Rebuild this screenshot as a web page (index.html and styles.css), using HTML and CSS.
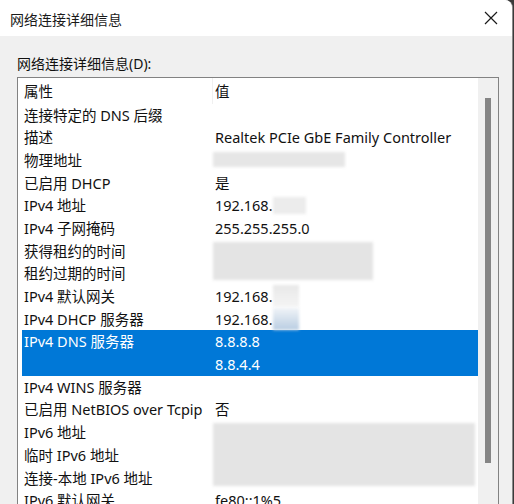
FILE: index.html
```html
<!DOCTYPE html>
<html lang="zh-CN">
<head>
<meta charset="utf-8">
<link rel="stylesheet" href="styles.css">
</head>
<body>
<div class="window">
  <div class="titlebar">
    <span class="title">网络连接详细信息</span>
    <svg class="close" width="14" height="14" viewBox="0 0 14 14"><path d="M1 1 L13 13 M13 1 L1 13" stroke="#1a1a1a" stroke-width="1.2" fill="none"/></svg>
  </div>
  <div class="content">
    <div class="label">网络连接详细信息(D):</div>
    <div class="listbox">
      <div class="list">
        <div class="row header"><div class="c1">属性</div><div class="c2">值</div></div>
        <div class="row"><div class="c1">连接特定的 DNS 后缀</div><div class="c2"></div></div>
        <div class="row"><div class="c1">描述</div><div class="c2">Realtek PCIe GbE Family Controller</div></div>
        <div class="row"><div class="c1">物理地址</div><div class="c2"><span class="blur mac"></span></div></div>
        <div class="row"><div class="c1">已启用 DHCP</div><div class="c2">是</div></div>
        <div class="row"><div class="c1">IPv4 地址</div><div class="c2">192.168.<span class="blur ip"></span></div></div>
        <div class="row"><div class="c1">IPv4 子网掩码</div><div class="c2">255.255.255.0</div></div>
        <div class="row"><div class="c1">获得租约的时间</div><div class="c2"><span class="blur lease"></span></div></div>
        <div class="row"><div class="c1">租约过期的时间</div><div class="c2"></div></div>
        <div class="row"><div class="c1">IPv4 默认网关</div><div class="c2">192.168.<span class="blur gw"></span></div></div>
        <div class="row"><div class="c1">IPv4 DHCP 服务器</div><div class="c2">192.168.<span class="blur dhcp"></span></div></div>
        <div class="row selected"><div class="c1">IPv4 DNS 服务器</div><div class="c2">8.8.8.8</div></div>
        <div class="row selected"><div class="c1"></div><div class="c2">8.8.4.4</div></div>
        <div class="row"><div class="c1">IPv4 WINS 服务器</div><div class="c2"></div></div>
        <div class="row"><div class="c1">已启用 NetBIOS over Tcpip</div><div class="c2">否</div></div>
        <div class="row"><div class="c1">IPv6 地址</div><div class="c2"><span class="blur v6"></span></div></div>
        <div class="row"><div class="c1">临时 IPv6 地址</div><div class="c2"></div></div>
        <div class="row"><div class="c1">连接-本地 IPv6 地址</div><div class="c2"></div></div>
        <div class="row"><div class="c1">IPv6 默认网关</div><div class="c2">fe80::1%5</div></div>
      </div>
      <div class="scrollbar"><div class="thumb"></div></div>
    </div>
  </div>
</div>
</body>
</html>
```
FILE: styles.css
```css
html, body {
  margin: 0;
  padding: 0;
  background: #3a3a3a;
  width: 514px;
  height: 504px;
  overflow: hidden;
}
body {
  font-family: "Noto Sans", "Noto Sans CJK SC", sans-serif;
  color: #111;
}
.window {
  width: 512px;
  height: 504px;
  background: #f0f0f0;
  border-right: 1px solid #8a8a8a;
  border-top-right-radius: 8px;
  overflow: hidden;
}
.titlebar {
  height: 36px;
  background: #ffffff;
  display: flex;
  align-items: center;
  justify-content: space-between;
  padding: 0 14px 0 10px;
}
.title {
  font-size: 14px;
  color: #1a1a1a;
  position: relative;
  top: 1px;
}
.close {
  display: block;
}
.content {
  padding: 19px 13px 0 17px;
}
.label {
  font-size: 14px;
  line-height: 18px;
  height: 22px;
  color: #111;
}
.listbox {
  border: 1px solid #828282;
  background: #ffffff;
  display: flex;
  height: 440px;
}
.list {
  flex: 1;
  padding-left: 4px;
  font-size: 14.5px;
}
.row {
  display: flex;
  height: 22.7px;
  line-height: 22.7px;
  white-space: nowrap;
}
.row.header {
  height: 25.5px;
  line-height: 27px;
}
.row.header .c1 {
  border-right: 1px solid #f0f0f0;
  width: 188px;
}
.c1 {
  width: 189px;
  padding-left: 2px;
  overflow: visible;
}
.c2 {
  padding-left: 2px;
  flex: 1;
  position: relative;
}
.row.selected {
  background: #0078d7;
  color: #ffffff;
}
.blur {
  display: inline-block;
  vertical-align: top;
  background: #e6e6e6;
  filter: blur(1.5px);
}
.mac {
  width: 132px;
  height: 15px;
  margin-top: 3px;
  margin-left: -2px;
}
.ip {
  width: 33px;
  height: 17px;
  margin-top: 3px;
  background: #ececec;
}
.lease {
  position: absolute;
  left: 0;
  top: 2px;
  width: 160px;
  height: 38px;
  background: #e4e4e4;
}
.gw {
  width: 26px;
  height: 22px;
  margin-top: 0;
  background: linear-gradient(#e8e8e8, #f4f4f4);
}
.dhcp {
  width: 26px;
  height: 22px;
  background: linear-gradient(#f0f3f7, #b9cde2);
}
.v6 {
  position: absolute;
  left: 0;
  top: 2px;
  width: 262px;
  height: 63px;
  background: #e4e4e4;
}
.scrollbar {
  width: 20px;
  background: #f0f0f0;
  position: relative;
}
.thumb {
  position: absolute;
  left: 7px;
  top: 20px;
  width: 6px;
  height: 365px;
  background: #858585;
}
```
